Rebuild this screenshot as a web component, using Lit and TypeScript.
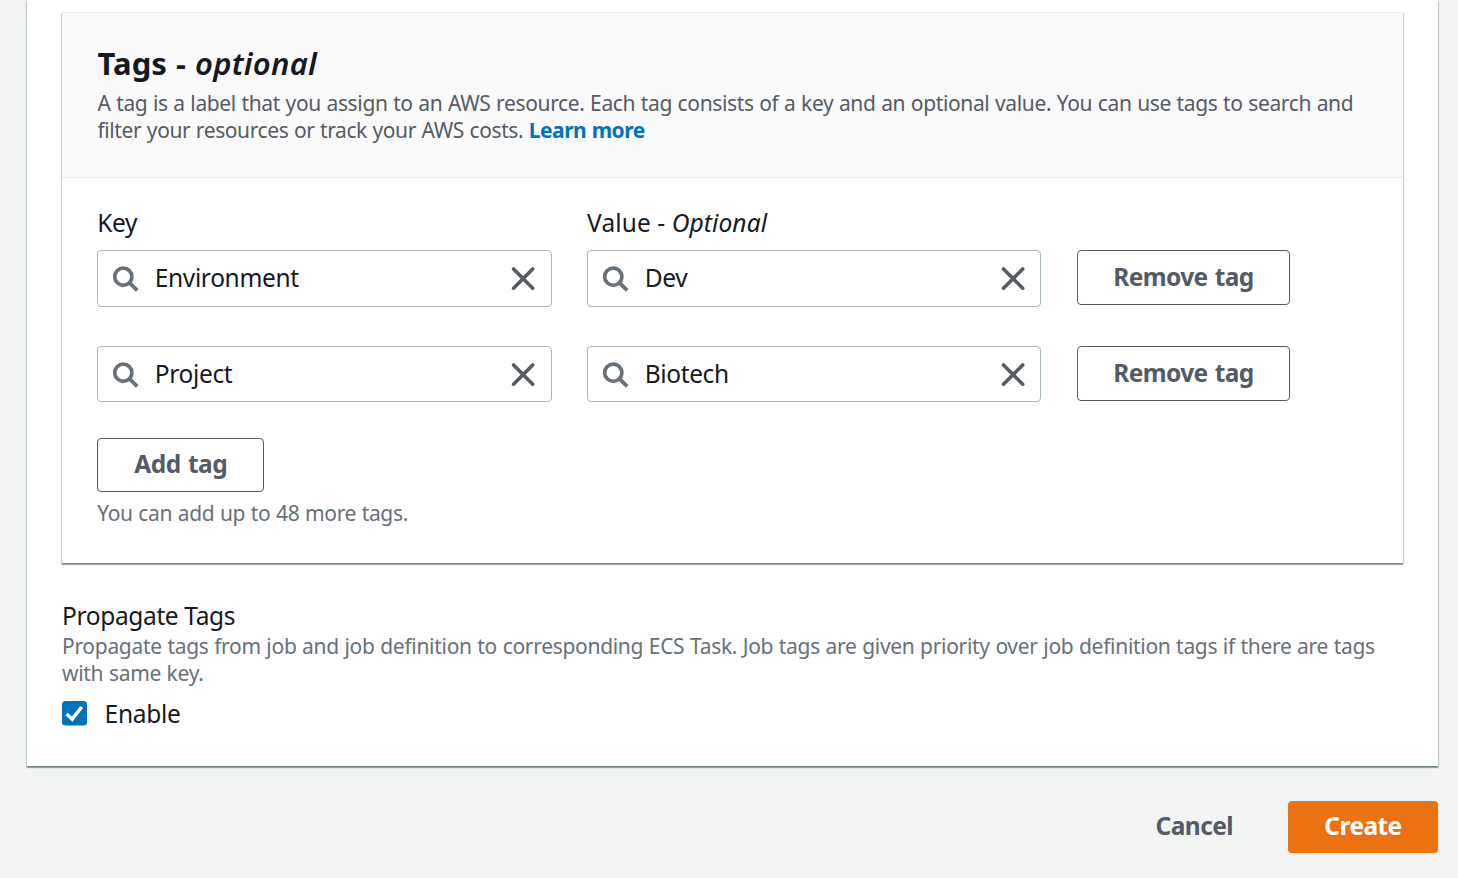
import { LitElement, html, css } from "lit";
import { customElement, property } from "lit/decorators.js";

@customElement("search-field")
class SearchField extends LitElement {
  @property() value = "";
  static styles = css`
    :host { display: flex; box-sizing: border-box; height: 56.4px; align-items: center; border: 1px solid #aab7b8; border-radius: 4px; background: #fff; padding: 0 13.4px 0 13px; }
    svg { flex: none; width: 28px; height: 28px; fill: none; }
    .search { stroke: #687078; stroke-width: 3.7; }
    .clear { stroke: #545b64; stroke-width: 3.6; stroke-linecap: round; }
    .text { flex: 1; padding-left: 15.6px; font-size: 24.5px; line-height: 34px; margin-top: -.4px; letter-spacing: -.36px; white-space: nowrap; }
  `;
  render() {
    return html`
      <svg class="search" viewBox="0 0 28 28"><circle cx="12.3" cy="12.7" r="8.6" /><path d="M18.2 18.6L26.2 26.4" /></svg>
      <span class="text">${this.value}</span>
      <svg class="clear" viewBox="0 0 28 28"><path d="M4.5 5L23.7 24.2M23.7 5L4.5 24.2" /></svg>
    `;
  }
}

@customElement("app-root")
class AppRoot extends LitElement {
  static styles = css`
    :host { display: block; height: 878px; overflow: hidden; background: #f2f4f4; color: #16191f; font-family: "Noto Sans", "Open Sans", sans-serif; font-size: 24.5px; }
    * { box-sizing: border-box; }
    .panel, .card { background: #fff; box-shadow: 0 2px 1px 0 rgba(0, 28, 36, .34), 1px 1px 1px 0 rgba(0, 28, 36, .16), -1px 1px 1px 0 rgba(0, 28, 36, .16); }
    .panel { margin: 0 20px 0 27px; height: 766px; padding: 12px 35px 0; }
    .card { height: 551px; border-top: 1px solid #eaeded; }
    .head { height: 165px; background: #fafafa; border-bottom: 1px solid #eaeded; padding: 29px 0 0 35.5px; }
    h2 { margin: 0; font-size: 31px; line-height: 42px; font-weight: 700; white-space: nowrap; letter-spacing: .1px; word-spacing: .8px; }
    h2 em { font-weight: 600; letter-spacing: .28px; }
    .desc { font-size: 21px; line-height: 27px; color: #545b64; white-space: nowrap; }
    .intro { padding-top: 6px; }
    .muted { color: #687078; }
    .line { display: block; letter-spacing: -.36px; word-spacing: .5px; }
    .filter { letter-spacing: -.4px; }
    .note { letter-spacing: -.3px; word-spacing: .45px; }
    .link { color: #0073bb; font-weight: 700; letter-spacing: -.5px; }
    .body { padding: 28px 0 0 35.2px; }
    .grid { display: grid; grid-template-columns: 454.4px 454.4px 213px; column-gap: 35.5px; }
    .label { line-height: 34px; height: 44.2px; white-space: nowrap; letter-spacing: .1px; }
    .key { letter-spacing: -.3px; }
    .cell { height: 95.5px; }
    button { display: block; height: 55px; padding: 0 0 1px; border: 1px solid #545b64; border-radius: 4px; background: #fff; color: #545b64; font: 700 24.5px/34px "Noto Sans", "Open Sans", sans-serif; letter-spacing: -.6px; word-spacing: 1.4px; white-space: nowrap; }
    .remove { width: 213px; }
    .add { width: 167px; height: 54px; margin-top: -3.2px; padding-bottom: 2px; letter-spacing: -.5px; }
    .hint { font-size: 21px; line-height: 27px; padding-top: 8.2px; white-space: nowrap; letter-spacing: -.34px; word-spacing: .5px; }
    .prop { line-height: 34px; padding-top: 35.6px; letter-spacing: -.36px; }
    .propdesc { padding-top: .8px; }
    .check { display: flex; align-items: center; gap: 17.6px; height: 34px; margin-top: 9.2px; }
    .check svg { width: 25px; height: 25px; }
    .enable { letter-spacing: -.3px; }
    .actions { display: flex; justify-content: flex-end; padding: 35px 20px 0 0; gap: 55px; }
    .actions button { height: 52px; border: 0; padding-bottom: 2px; letter-spacing: -.58px; }
    .actions .cancel { background: none; }
    .actions .create { width: 150px; background: #ec7211; color: #fff; }
  `;
  tags = [["Environment", "Dev"], ["Project", "Biotech"]];
  render() {
    return html`
      <section class="panel">
        <div class="card">
          <div class="head">
            <h2>Tags - <em>optional</em></h2>
            <div class="desc intro">
              <span class="line">A tag is a label that you assign to an AWS resource. Each tag consists of a key and an optional value. You can use tags to search and</span>
              <span class="line"><span class="filter">filter your resources or track your AWS costs. </span><span class="link">Learn more</span></span>
            </div>
          </div>
          <div class="body">
            <div class="grid">
              <div class="label key">Key</div><div class="label">Value - <em>Optional</em></div><div></div>
              ${this.tags.map(([k, v]) => html`
                <div class="cell"><search-field .value=${k}></search-field></div>
                <div class="cell"><search-field .value=${v}></search-field></div>
                <div class="cell"><button class="remove">Remove tag</button></div>`)}
            </div>
            <button class="add">Add tag</button>
            <div class="hint muted">You can add up to 48 more tags.</div>
          </div>
        </div>
        <div class="prop">Propagate Tags</div>
        <div class="desc muted propdesc">
          <span class="line note">Propagate tags from job and job definition to corresponding ECS Task. Job tags are given priority over job definition tags if there are tags</span>
          <span class="line note">with same key.</span>
        </div>
        <div class="check">
          <svg viewBox="0 0 25 25"><rect width="25" height="24.5" rx="3.5" fill="#0073bb" /><path d="M4.6 13L10.2 18.2L19.7 6" fill="none" stroke="#fff" stroke-width="3.5" /></svg>
          <span class="enable">Enable</span>
        </div>
      </section>
      <div class="actions"><button class="cancel">Cancel</button><button class="create">Create</button></div>
    `;
  }
}
